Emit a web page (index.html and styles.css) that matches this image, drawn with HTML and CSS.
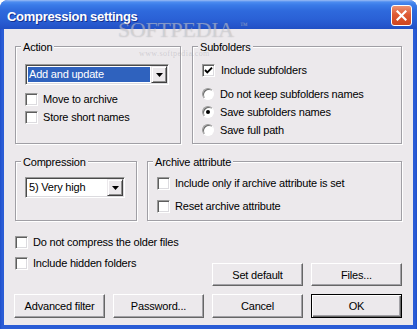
FILE: index.html
```html
<!DOCTYPE html>
<html lang="en">
<head>
    <meta charset="UTF-8" />
    <title>Compression settings</title>
    <link rel="stylesheet" href="styles.css">
</head>
<body>

    <div class="window">
        <div class="titlebar">
            <div class="title">Compression settings</div>
            <div class="close">
                <svg width="11" height="11" viewBox="0 0 11 11">
                    <path d="M1.5 1.5 L9.5 9.5 M9.5 1.5 L1.5 9.5" stroke="#fff" stroke-width="2.2" stroke-linecap="square" />
                </svg>
            </div>
        </div>

        <div class="client">
            <div class="top-row">
                <div class="group action">
                    <span class="legend">Action</span>
                    <div class="combo combo-action selected">
                        <span class="combo-text">Add and update</span>
                        <span class="drop"><svg width="7" height="4" viewBox="0 0 7 4"><path d="M0 0 H7 L3.5 4 Z" fill="#000" /></svg></span>
                    </div>
                    <div class="checks action-checks">
                        <label class="check"><span class="box"></span>Move to archive</label>
                        <label class="check"><span class="box"></span>Store short names</label>
                    </div>
                </div>

                <div class="group subfolders">
                    <span class="legend">Subfolders</span>
                    <label class="check sub-check">
                        <span class="box">
                            <svg width="11" height="11" viewBox="0 0 11 11"><path d="M2 5 L4.3 7.4 L9 2.6" fill="none" stroke="#000" stroke-width="1.9" /></svg>
                        </span>Include subfolders
                    </label>
                    <div class="radios">
                        <label class="check"><span class="radio"></span>Do not keep subfolders names</label>
                        <label class="check"><span class="radio on"></span>Save subfolders names</label>
                        <label class="check"><span class="radio"></span>Save full path</label>
                    </div>
                </div>
            </div>

            <div class="mid-row">
                <div class="group compression">
                    <span class="legend">Compression</span>
                    <div class="combo combo-level">
                        <span class="combo-text">5) Very high</span>
                        <span class="drop"><svg width="7" height="4" viewBox="0 0 7 4"><path d="M0 0 H7 L3.5 4 Z" fill="#000" /></svg></span>
                    </div>
                </div>

                <div class="group archive">
                    <span class="legend">Archive attribute</span>
                    <div class="checks archive-checks">
                        <label class="check"><span class="box"></span>Include only if archive attribute is set</label>
                        <label class="check"><span class="box"></span>Reset archive attribute</label>
                    </div>
                </div>
            </div>

            <div class="lower">
                <div class="checks lower-checks">
                    <label class="check"><span class="box"></span>Do not compress the older files</label>
                    <label class="check"><span class="box"></span>Include hidden folders</label>
                </div>
                <div class="btn-row">
                    <button class="btn">Set default</button>
                    <button class="btn">Files...</button>
                </div>
            </div>

            <div class="btn-row bottom">
                <button class="btn">Advanced filter</button>
                <button class="btn">Password...</button>
                <button class="btn">Cancel</button>
                <button class="btn default">OK</button>
            </div>
        </div>

        <div class="mark">SOFTPEDIA<span class="tm">™</span></div>
        <div class="mark-url">www.softpedia.com</div>
    </div>

</body>
</html>
```

FILE: styles.css
```css
* {
    box-sizing: border-box;
}

body {
    margin: 0;
    background: #fff;
    font: 11px "Liberation Sans", Arial, sans-serif;
    letter-spacing: -0.2px;
    color: #000;
}

.window {
    position: relative;
    width: 417px;
    height: 329px;
    display: flex;
    flex-direction: column;
    background: linear-gradient(to right, #1E4FCB, #2A5CD6 2px, #2A5CD6 calc(100% - 2px), #1E4FCB);
    border-radius: 8px 8px 0 0;
    overflow: hidden;
}

.titlebar {
    flex: none;
    height: 29px;
    display: flex;
    align-items: center;
    justify-content: space-between;
    padding: 0 5px 0 7px;
    background: linear-gradient(to bottom, #9CBDF4 0, #4C8CF0 2px, #3A7BE8 5px, #2E69DC 11px, #2A61D6 19px, #2657CD 25px, #2150C4 29px);
}

.title {
    margin-top: 3px;
    color: #fff;
    font-size: 13px;
    font-weight: bold;
    letter-spacing: -0.3px;
    text-shadow: 1px 1px #13308F;
}

.close {
    width: 21px;
    height: 21px;
    margin-top: 1px;
    display: flex;
    align-items: center;
    justify-content: center;
    border: 1px solid #fff;
    border-radius: 3px;
    background: linear-gradient(to bottom, #EE9373, #DE5A33 45%, #CF4520);
}

.client {
    flex: 1;
    margin: 0 4px 4px;
    padding: 17px 11px 0;
    background: #ECE9EC;
    display: flex;
    flex-direction: column;
}

.top-row, .mid-row {
    display: flex;
}

.top-row {
    gap: 11px;
}

.mid-row {
    gap: 10px;
    margin-top: 17px;
}

.group {
    height: 98px;
    padding: 0 9px;
    border: 1px solid #A09FA5;
    box-shadow: inset 1px 1px #fff, 1px 1px #fff;
}

.legend {
    display: block;
    width: max-content;
    margin: -6px 0 0 -4px;
    padding: 0 2px;
    line-height: 13px;
    background: #ECE9EC;
}

.action {
    width: 166px;
}

.subfolders {
    width: 210px;
}

.compression {
    width: 122px;
    height: 60px;
}

.archive {
    flex: 1;
    height: 60px;
}

/* combo boxes */
.combo {
    display: flex;
    height: 21px;
    padding: 1px;
    background: #fff;
    border: 1px solid;
    border-color: #9A9A9A #fff #fff #9A9A9A;
    box-shadow: inset 1px 1px #4A4A4A, inset -1px -1px #DCDBDF;
}

.combo-action {
    width: 144px;
    margin-top: 10px;
}

.combo-level {
    width: 100px;
    margin-top: 8px;
}

.combo-text {
    flex: 1;
    margin: 1px;
    padding-left: 1px;
    line-height: 15px;
}

.selected .combo-text {
    background: #2F62BE;
    color: #fff;
}

.drop {
    width: 16px;
    display: flex;
    align-items: center;
    justify-content: center;
    background: #ECE9EC;
    border: 1px solid;
    border-color: #ECE9EC #404040 #404040 #ECE9EC;
    box-shadow: inset 1px 1px #fff, inset -1px -1px #8E8E8E;
}

/* check boxes and radios */
.checks {
    display: flex;
    flex-direction: column;
}

.check {
    display: flex;
    align-items: center;
    gap: 5px;
    height: 18px;
    line-height: 13px;
    white-space: nowrap;
}

.action-checks {
    margin-top: 5px;
}

.sub-check {
    margin-top: 7px;
    gap: 6px;
}

.radios {
    margin-top: 6px;
}

.radios .check {
    gap: 6px;
}

.archive-checks {
    margin-top: 5px;
    gap: 5px;
}

.box {
    flex: none;
    width: 13px;
    height: 13px;
    display: flex;
    align-items: center;
    justify-content: center;
    background: #fff;
    border: 1px solid;
    border-color: #9A9A9A #fff #fff #9A9A9A;
    box-shadow: inset 1px 1px #5E5E5E, inset -1px -1px #DCDBDF;
}

.radio {
    flex: none;
    width: 12px;
    height: 12px;
    display: flex;
    align-items: center;
    justify-content: center;
    border-radius: 50%;
    background: #fff;
    border: 1px solid;
    border-color: #9A9A9A #fff #fff #9A9A9A;
    box-shadow: inset 1px 1px #6A6A6A;
}

.radio.on::after {
    content: "";
    width: 4px;
    height: 4px;
    border-radius: 50%;
    background: #000;
}

/* lower part */
.lower {
    height: 65px;
    display: flex;
    justify-content: space-between;
}

.lower-checks {
    margin-top: 12px;
    gap: 3px;
}

.btn-row {
    display: flex;
    gap: 8px;
    align-self: flex-end;
}

.btn-row.bottom {
    margin: 8px 0 0 -1px;
    align-self: flex-start;
}

.btn {
    width: 91px;
    height: 23px;
    padding: 0;
    font: inherit;
    letter-spacing: inherit;
    color: #000;
    background: #ECE9EC;
    border: 1px solid;
    border-color: #fff #666 #666 #fff;
    box-shadow: inset -1px -1px #A2A1A6;
}

.bottom .btn {
    height: 24px;
}

.btn.default {
    border-color: #000;
    box-shadow: inset 1px 1px #fff, inset -1px -1px #666, inset -2px -2px #A2A1A6;
}

/* watermark over the picture */
.mark {
    position: absolute;
    left: 118px;
    top: 19px;
    font: 22px/22px "Liberation Serif", serif;
    letter-spacing: -0.3px;
    color: rgba(255, 255, 255, 0.35);
    text-shadow: 0 0 1px rgba(110, 110, 120, 0.45);
    pointer-events: none;
}

.tm {
    position: relative;
    top: -9px;
    margin-left: 6px;
    font-size: 8px;
}

.mark-url {
    position: absolute;
    left: 139px;
    top: 49px;
    font: 8px "Liberation Serif", serif;
    letter-spacing: 0.4px;
    color: rgba(150, 150, 160, 0.35);
    pointer-events: none;
}
```
